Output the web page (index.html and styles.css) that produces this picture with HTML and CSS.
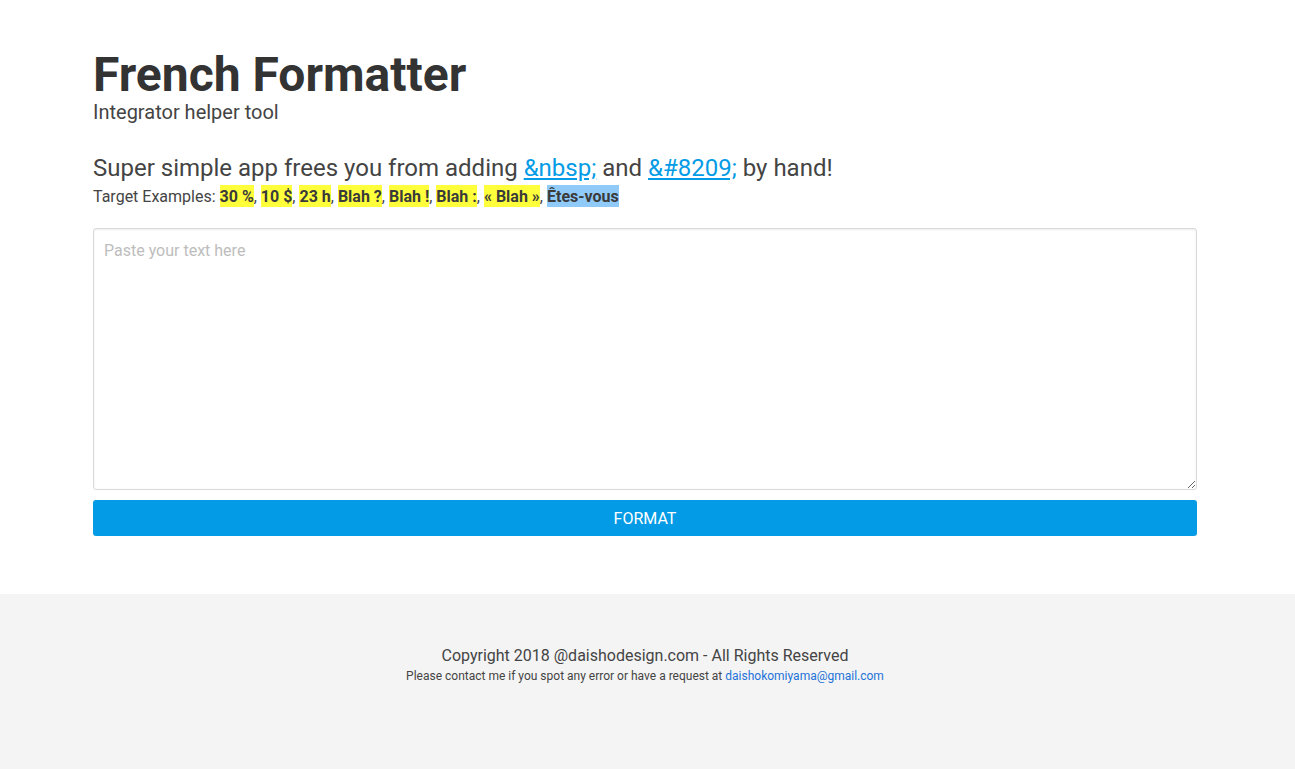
FILE: index.html
```html
<!DOCTYPE html>
<html lang="en">
<head>
<meta charset="utf-8">
<title>French Formatter</title>
<link rel="stylesheet" href="styles.css">
</head>
<body>
<main class="main">
  <div class="container">
    <header class="header">
      <h1 class="title">French Formatter</h1>
      <p class="subtitle">Integrator helper tool</p>
    </header>
    <p class="tagline">Super simple app frees you from adding <a class="link" href="#">&amp;nbsp;</a> and <a class="link" href="#">&amp;#8209;</a> by hand!</p>
    <p class="examples">Target Examples: <span class="hl">30&nbsp;%</span>, <span class="hl">10&nbsp;$</span>, <span class="hl">23&nbsp;h</span>, <span class="hl">Blah&nbsp;?</span>, <span class="hl">Blah&nbsp;!</span>, <span class="hl">Blah&nbsp;:</span>, <span class="hl">«&nbsp;Blah&nbsp;»</span>, <span class="hl hl-blue">Êtes-vous</span></p>
    <textarea class="input" placeholder="Paste your text here"></textarea>
    <button class="btn" type="button">FORMAT</button>
  </div>
</main>
<footer class="footer">
  <div class="container footer-inner">
    <p class="copy">Copyright 2018 @daishodesign.com - All Rights Reserved</p>
    <p class="contact">Please contact me if you spot any error or have a request at <a class="mail" href="#">daishokomiyama@gmail.com</a></p>
  </div>
</footer>
</body>
</html>
```
FILE: styles.css
```css
html, body {
  margin: 0;
  padding: 0;
}
body {
  font-family: Roboto, "Liberation Sans", Arial, sans-serif;
  color: #444;
  background: #fff;
}
.container {
  width: 1104px;
  margin-left: 93px;
}
.main {
  padding: 47px 0 58px;
}
.header {
  display: flex;
  flex-direction: column;
}
.title {
  margin: 0;
  font-size: 48px;
  line-height: 56px;
  font-weight: 700;
  color: #333;
}
.subtitle {
  margin: 0;
  font-size: 20px;
  line-height: 18px;
  color: #444;
}
.tagline {
  margin: 32px 0 0;
  font-size: 24px;
  line-height: 30px;
  color: #444;
}
.link {
  color: #039be5;
  text-decoration: underline;
}
.examples {
  margin: 2px 0 0;
  font-size: 16px;
  line-height: 24px;
  color: #444;
}
.hl {
  background: #ffff3b;
  font-weight: 700;
  color: #3a3a3a;
  padding: 2px 0 1px;
}
.hl-blue {
  background: #90caf9;
}
.input {
  display: block;
  box-sizing: border-box;
  width: 100%;
  height: 262px;
  margin: 19px 0 0;
  padding: 12px 10px;
  border: 1px solid #d9d9d9;
  border-radius: 3px;
  box-shadow: inset 0 1px 2px rgba(0,0,0,0.08);
  font-family: Roboto, "Liberation Sans", Arial, sans-serif;
  font-size: 16px;
  line-height: 20px;
  color: #333;
  resize: vertical;
}
.input::placeholder {
  color: #bdbdbd;
}
.btn {
  display: block;
  width: 100%;
  height: 36px;
  margin-top: 10px;
  border: none;
  border-radius: 3px;
  background: #039be5;
  color: #fff;
  font-family: Roboto, "Liberation Sans", Arial, sans-serif;
  font-size: 16px;
  letter-spacing: 0;
  cursor: pointer;
}
.footer {
  background: #f4f4f4;
  height: 175px;
  padding-top: 51px;
  box-sizing: border-box;
}
.footer-inner {
  text-align: center;
}
.copy {
  margin: 0;
  font-size: 16px;
  line-height: 22px;
  color: #444;
}
.contact {
  margin: 0;
  font-size: 12px;
  line-height: 18px;
  color: #444;
}
.mail {
  color: #1e73d8;
  text-decoration: none;
}
```
